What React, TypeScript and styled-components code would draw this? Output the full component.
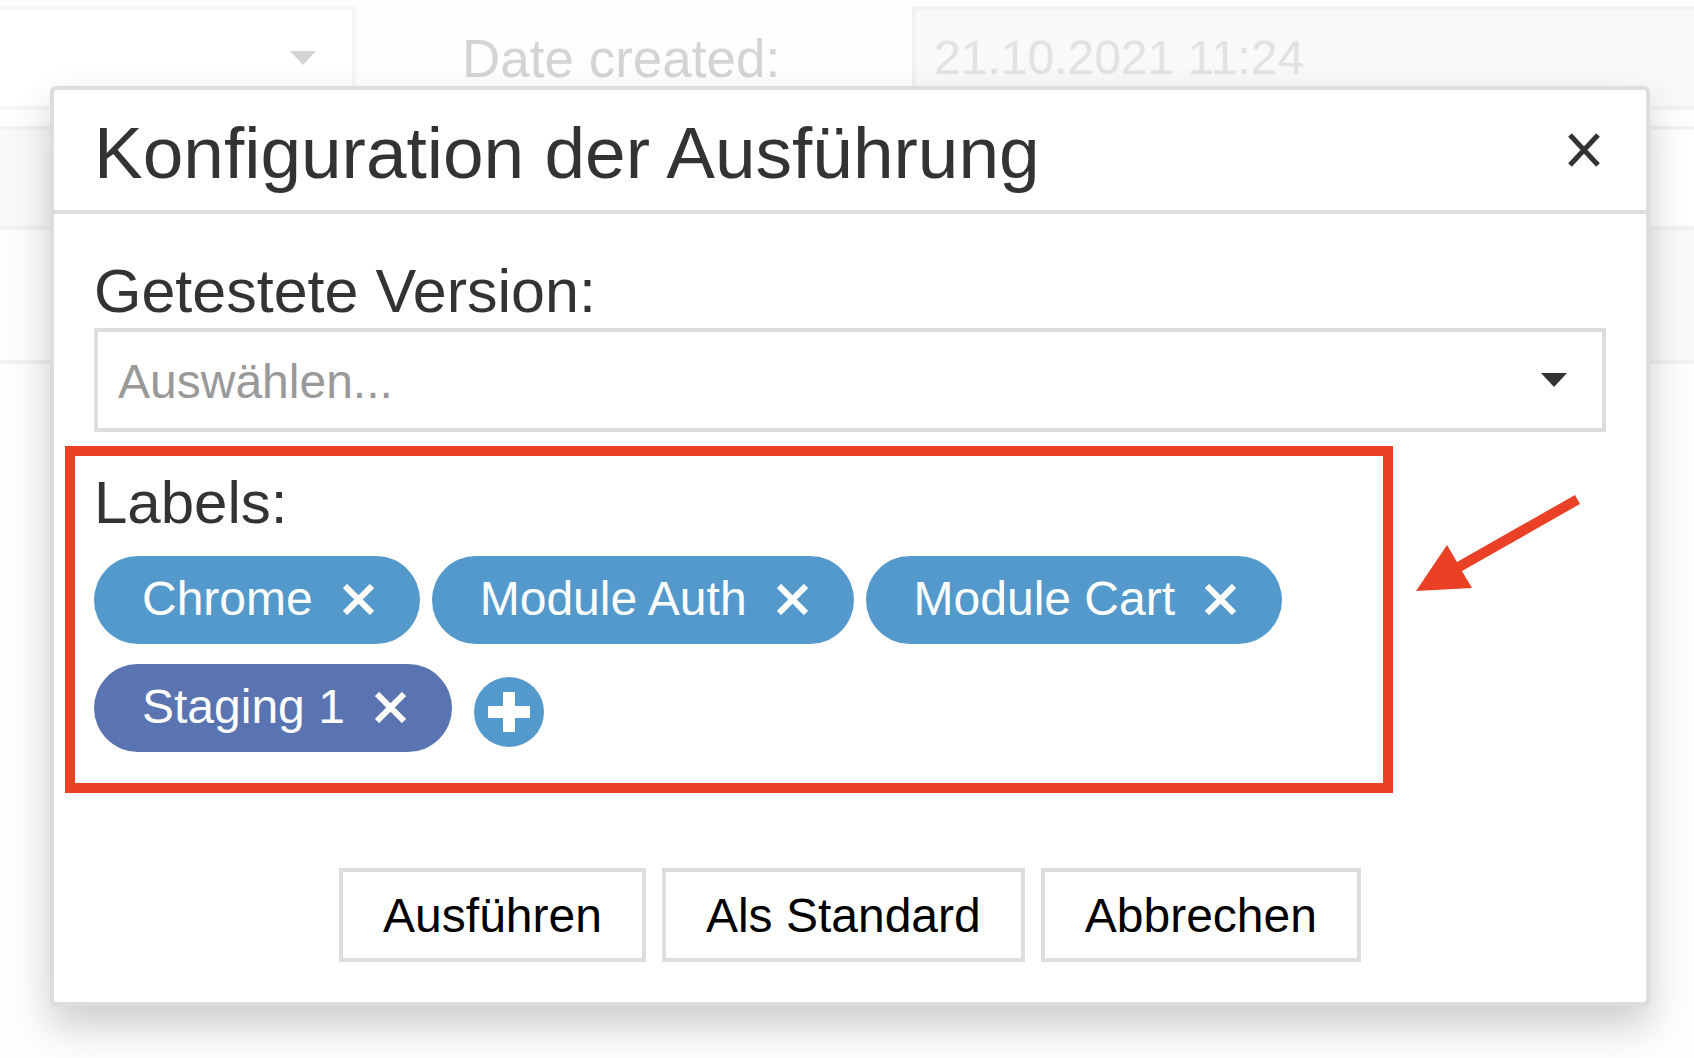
import { useState } from 'react';
import styled, { createGlobalStyle } from 'styled-components';

const GlobalStyle = createGlobalStyle`
  *, *::before, *::after { box-sizing: border-box; }
  body {
    margin: 0;
    background: #fefefe;
    font-family: "Liberation Sans", Arial, Helvetica, sans-serif;
    color: #333;
  }
  button, input, select { font: inherit; margin: 0; }
`;

const Page = styled.div`
  position: relative;
  min-height: 100vh;
  overflow: hidden;
`;

const FormRow = styled.div`
  display: grid;
  grid-template-columns: 356fr 556fr 782fr;
  align-items: center;
  padding-top: 6px;
`;

const FadedSelectWrap = styled.div`
  position: relative;
`;

const FadedSelect = styled.select`
  appearance: none;
  display: block;
  width: 100%;
  height: 104px;
  border: 4px solid #f5f6f6;
  border-left: 0;
  border-radius: 0;
  background: #fff;
`;

const FadedLabel = styled.label`
  padding: 2px 0 0 106px;
  font-size: 53px;
  line-height: 60px;
  color: #d4d4d4;
`;

const FadedInput = styled.input`
  display: block;
  width: 100%;
  height: 104px;
  padding: 0 18px 2px;
  border: 4px solid #f2f2f2;
  border-right: 0;
  border-radius: 0;
  background: #f9f9f9;
  font-size: 48px;
  color: #e2e2e2;
`;

const Caret = styled.svg<{ $right: number; $color: string }>`
  position: absolute;
  top: 45px;
  right: ${(p) => p.$right}px;
  width: 26px;
  height: 14px;
  fill: ${(p) => p.$color};
  pointer-events: none;
`;

const BackRows = styled.div`
  margin-top: 16px;
  border-top: 4px solid #f2f2f2;
`;

const BackRow = styled.div<{ $height: number; $from: string; $to: string }>`
  height: ${(p) => p.$height}px;
  border-bottom: 4px solid #f2f2f2;
  background: linear-gradient(to right, ${(p) => p.$from} 50%, ${(p) => p.$to} 50%);
`;

const Overlay = styled.div`
  position: absolute;
  inset: 0;
  padding: 86px 44px 0 50px;
`;

const Dialog = styled.section`
  border: 4px solid #ddd;
  border-radius: 6px;
  background: #fff;
  box-shadow: 0 20px 40px rgba(0, 0, 0, 0.2);
`;

const DialogHeader = styled.header`
  display: flex;
  align-items: center;
  justify-content: space-between;
  height: 124px;
  padding: 0 46px 0 40px;
  border-bottom: 4px solid #ddd;
`;

const Title = styled.h1`
  margin: 0;
  padding-top: 6px;
  font-size: 73px;
  font-weight: 400;
  line-height: 84px;
`;

const IconButton = styled.button`
  display: flex;
  padding: 0;
  border: 0;
  background: none;
  color: inherit;
  cursor: pointer;
`;

const DialogBody = styled.div`
  padding: 42px 40px 40px;
`;

const FieldLabel = styled.label`
  display: block;
  padding-bottom: 2px;
  font-size: 61px;
  line-height: 70px;
`;

const SelectWrap = styled.div`
  position: relative;
`;

const VersionSelect = styled.select`
  appearance: none;
  display: block;
  width: 100%;
  height: 104px;
  padding: 2px 80px 0 20px;
  border: 4px solid #ddd;
  border-radius: 0;
  background: #fff;
  font-size: 48px;
  color: #999;
`;

const LabelsArea = styled.div`
  position: relative;
  margin: 14px 0 0 -29px;
`;

const LabelsBox = styled.fieldset`
  min-width: 0;
  width: calc(100% - 213px);
  height: 347px;
  margin: 0;
  padding: 12px 19px;
  border: 10px solid #ea4126;
`;

const LabelsTitle = styled.div`
  font-size: 60px;
  line-height: 70px;
`;

const Tags = styled.div`
  display: flex;
  flex-wrap: wrap;
  gap: 20px 12px;
  margin-top: 18px;
`;

const Tag = styled.span<{ $color: string }>`
  display: flex;
  align-items: center;
  gap: 30px;
  height: 88px;
  padding: 0 46px 2px 48px;
  border-radius: 44px;
  background: ${(p) => p.$color};
  color: #fff;
  font-size: 48px;
  line-height: 56px;
`;

const AddButton = styled.button`
  display: flex;
  align-items: center;
  justify-content: center;
  width: 70px;
  height: 70px;
  margin: 13px 0 0 10px;
  padding: 0;
  border: 0;
  border-radius: 50%;
  background: #5499cb;
  cursor: pointer;
`;

const Arrow = styled.svg`
  position: absolute;
  top: 49px;
  right: 26px;
  width: 164px;
  height: 96px;
  fill: #ea4126;
`;

const Actions = styled.footer`
  display: flex;
  justify-content: center;
  gap: 16px;
  margin-top: 75px;
`;

const ActionButton = styled.button`
  height: 94px;
  padding: 2px 40px 0;
  border: 4px solid #ddd;
  border-radius: 0;
  background: #fff;
  color: #000;
  font-size: 48px;
  line-height: 56px;
  cursor: pointer;
`;

const initialTags = [
  { name: 'Chrome', color: '#5499cb' },
  { name: 'Module Auth', color: '#5499cb' },
  { name: 'Module Cart', color: '#5499cb' },
  { name: 'Staging 1', color: '#5a73b1' },
];

function DownCaret({ right, color }: { right: number; color: string }) {
  return (
    <Caret $right={right} $color={color} viewBox="0 0 26 14" aria-hidden="true">
      <path d="M0 0h26L13 14z" />
    </Caret>
  );
}

export default function App() {
  const [tags, setTags] = useState(initialTags);

  return (
    <Page>
      <GlobalStyle />
      <FormRow>
        <FadedSelectWrap>
          <FadedSelect aria-label="Status" />
          <DownCaret right={40} color="#d4d4d4" />
        </FadedSelectWrap>
        <FadedLabel htmlFor="created">Date created:</FadedLabel>
        <FadedInput id="created" readOnly value="21.10.2021 11:24" />
      </FormRow>
      <BackRows>
        <BackRow $height={100} $from="#fafafa" $to="#ffffff" />
        <BackRow $height={134} $from="#fdfdfd" $to="#fafafa" />
      </BackRows>

      <Overlay>
        <Dialog role="dialog" aria-labelledby="dialog-title">
          <DialogHeader>
            <Title id="dialog-title">Konfiguration der Ausführung</Title>
            <IconButton aria-label="Schließen">
              <svg width="32" height="34" viewBox="0 0 32 34" fill="none" stroke="currentColor" strokeWidth="5">
                <path d="M2 2l28 30M30 2l-28 30" />
              </svg>
            </IconButton>
          </DialogHeader>
          <DialogBody>
            <FieldLabel htmlFor="version">Getestete Version:</FieldLabel>
            <SelectWrap>
              <VersionSelect id="version" defaultValue="">
                <option value="">Auswählen...</option>
              </VersionSelect>
              <DownCaret right={39} color="#333" />
            </SelectWrap>
            <LabelsArea>
              <LabelsBox aria-labelledby="labels-title">
                <LabelsTitle id="labels-title">Labels:</LabelsTitle>
                <Tags>
                  {tags.map((tag) => (
                    <Tag key={tag.name} $color={tag.color}>
                      {tag.name}
                      <IconButton
                        aria-label={`${tag.name} entfernen`}
                        onClick={() => setTags(tags.filter((t) => t !== tag))}
                      >
                        <svg width="31" height="31" viewBox="0 0 31 31" fill="none" stroke="currentColor" strokeWidth="6">
                          <path d="M2 2l27 27M29 2l-27 27" />
                        </svg>
                      </IconButton>
                    </Tag>
                  ))}
                  <AddButton aria-label="Label hinzufügen">
                    <svg width="42" height="42" viewBox="0 0 42 42" fill="#fff">
                      <path d="M15 1h12v14h15v12H27v14H15V27H0V15h15z" />
                    </svg>
                  </AddButton>
                </Tags>
              </LabelsBox>
              <Arrow viewBox="0 0 164 96" aria-hidden="true">
                <path d="M0 96L31 50L41 67L159 0L164 9L46 76L56 93z" />
              </Arrow>
            </LabelsArea>
            <Actions>
              <ActionButton>Ausführen</ActionButton>
              <ActionButton>Als Standard</ActionButton>
              <ActionButton>Abbrechen</ActionButton>
            </Actions>
          </DialogBody>
        </Dialog>
      </Overlay>
    </Page>
  );
}
